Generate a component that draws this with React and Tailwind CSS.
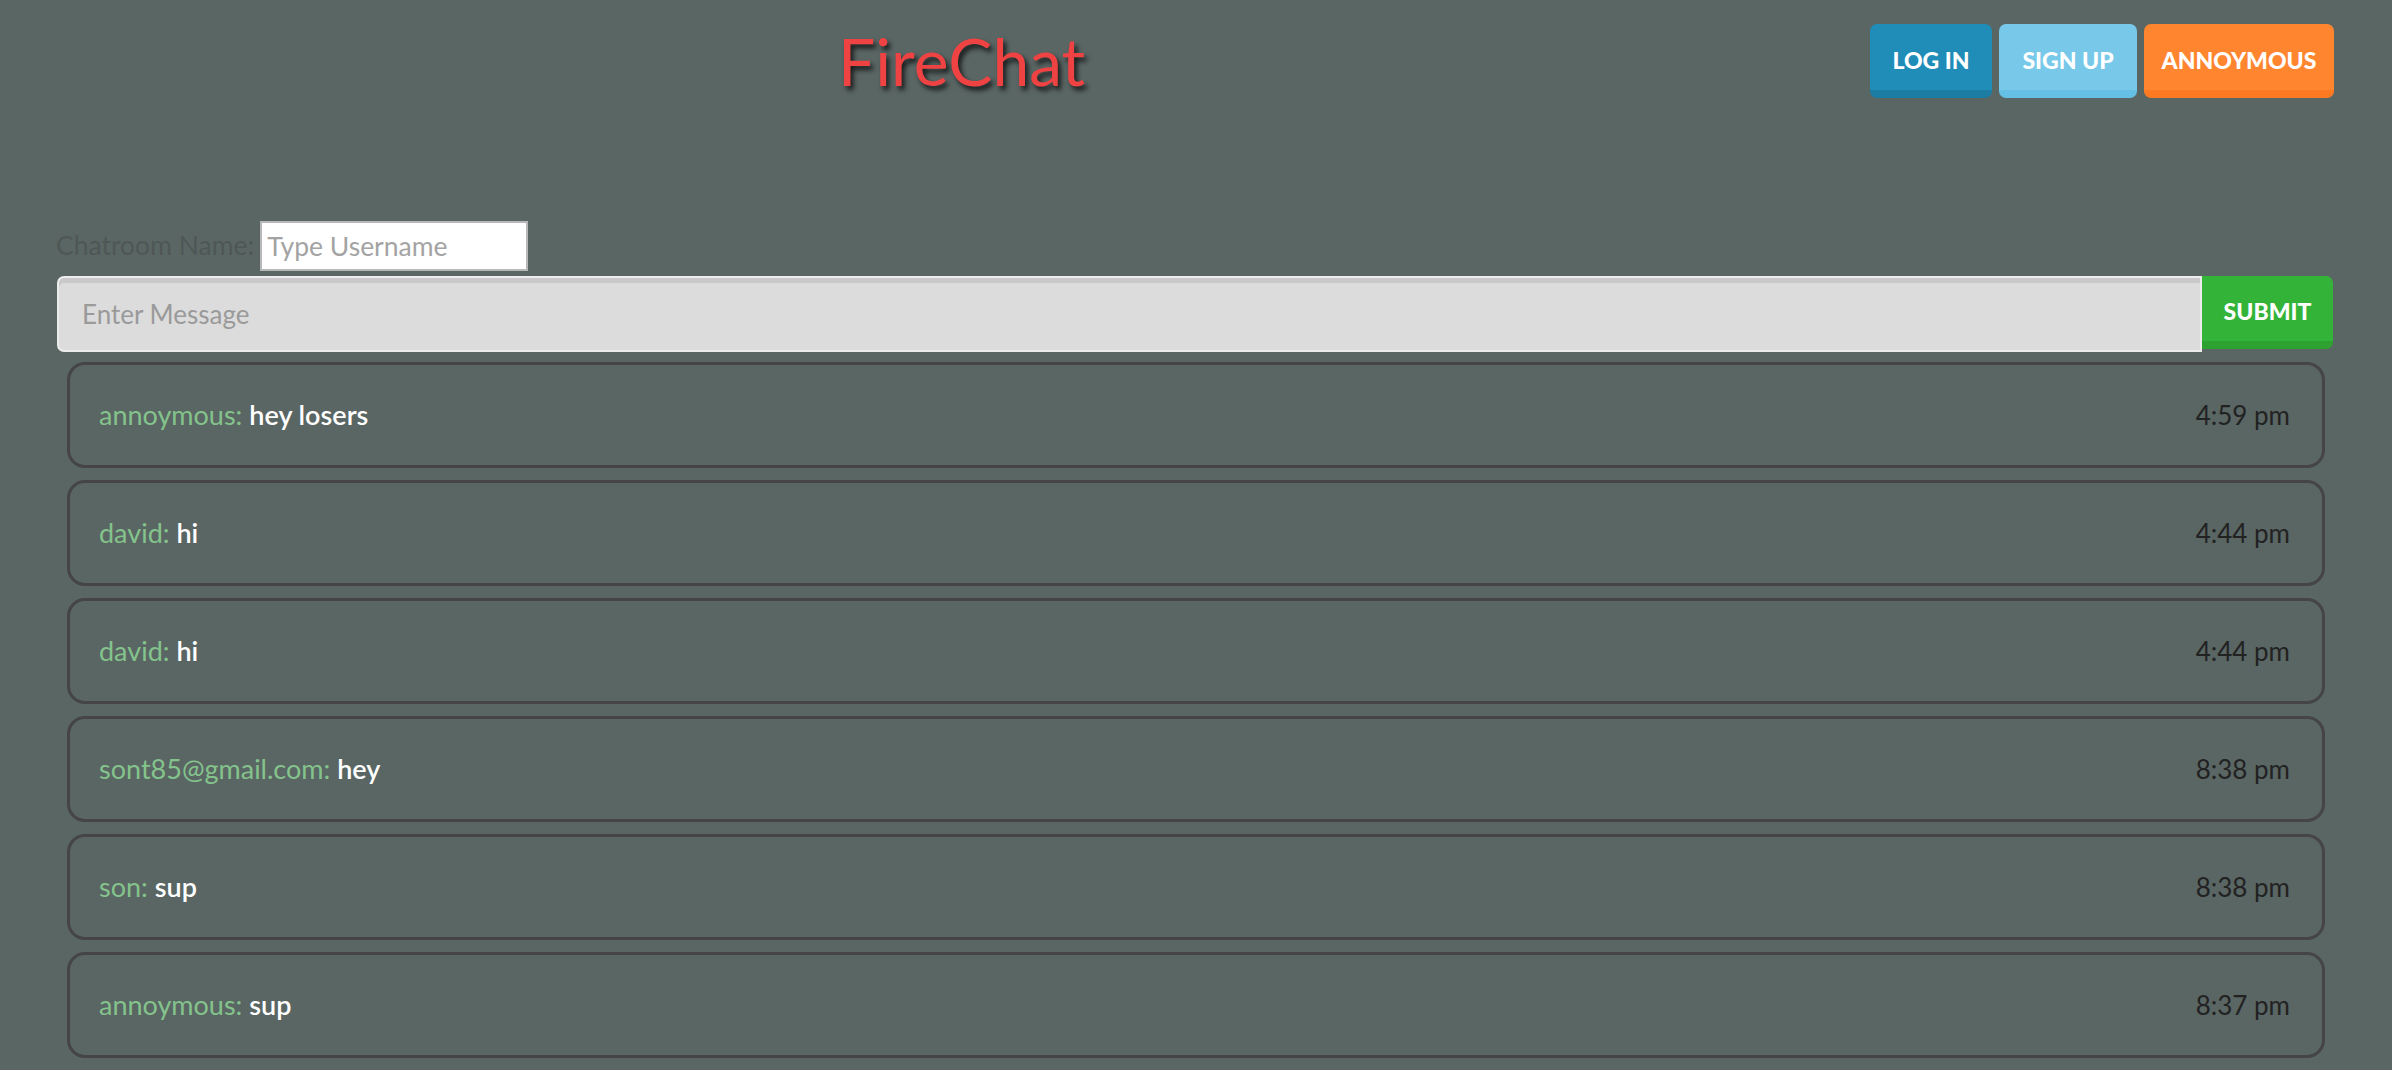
import React from "react";

const messages = [
  { user: "annoymous:", text: "hey losers", time: "4:59 pm" },
  { user: "david:", text: "hi", time: "4:44 pm" },
  { user: "david:", text: "hi", time: "4:44 pm" },
  { user: "sont85@gmail.com:", text: "hey", time: "8:38 pm" },
  { user: "son:", text: "sup", time: "8:38 pm" },
  { user: "annoymous:", text: "sup", time: "8:37 pm" },
];

export default function App() {
  return (
    <div
      className="min-h-[1070px] w-full bg-[#5a6664] overflow-hidden"
      style={{ fontFamily: "Lato, 'Open Sans', sans-serif" }}
    >
      {/* Header */}
      <div className="flex items-start justify-between h-[102px]">
        <h1 className="ml-[838px] mt-[21px] text-[66px] leading-[80px] text-[#ef4343] font-normal [text-shadow:3px_4px_5px_rgba(0,0,0,0.75)]">
          FireChat
        </h1>
        <div className="mt-[24px] mr-[58px] flex gap-[7px]">
          <button className="h-[74px] w-[122px] rounded-[7px] bg-[#208cb8] border-b-[8px] border-[#1b7ca4] text-white font-black text-[23px] pt-[6px]">
            LOG IN
          </button>
          <button className="h-[74px] w-[138px] rounded-[7px] bg-[#78c9e9] border-b-[8px] border-[#66bfe4] text-white font-black text-[23px] pt-[6px]">
            SIGN UP
          </button>
          <button className="h-[74px] w-[190px] rounded-[7px] bg-[#ff862f] border-b-[8px] border-[#fd7a22] text-white font-black text-[23px] pt-[6px]">
            ANNOYMOUS
          </button>
        </div>
      </div>

      {/* Chatroom name */}
      <div className="mt-[119px] ml-[56px] flex items-center">
        <span className="text-[26.5px] text-[#4f5756] mr-[6px]">Chatroom Name:</span>
        <input
          className="h-[50px] w-[268px] bg-white border-2 border-[#b8b8b8] px-[5px] text-[26.5px] text-[#333] placeholder:text-[#a3a3a3] outline-none"
          placeholder="Type Username"
        />
      </div>

      {/* Message input */}
      <div className="mt-[5px] ml-[57px] mr-[59px] flex">
        <input
          className="h-[76px] flex-1 rounded-l-[7px] bg-[#dcdcdc] border-2 border-[#ececec] shadow-[inset_0_5px_0_#c9c9c9] pl-[23px] text-[26px] text-[#333] placeholder:text-[#9a9a9a] outline-none"
          placeholder="Enter Message"
        />
        <button className="h-[73px] w-[131px] rounded-r-[7px] bg-[#33b438] border-b-[8px] border-[#2da231] text-white font-black text-[23px] pt-[6px]">
          SUBMIT
        </button>
      </div>

      {/* Messages */}
      <div className="mt-[10px] mx-[67px] flex flex-col gap-[12px]">
        {messages.map((m, i) => (
          <div
            key={i}
            className="h-[106px] rounded-[18px] border-[3.5px] border-[#454545] flex items-center justify-between pl-[29px] pr-[32px]"
          >
            <div className="text-[27px]">
              <span className="text-[#84c38b]">{m.user}</span>{" "}
              <span className="text-white font-semibold">{m.text}</span>
            </div>
            <div className="text-[26px] text-[#222]">{m.time}</div>
          </div>
        ))}
      </div>
    </div>
  );
}
